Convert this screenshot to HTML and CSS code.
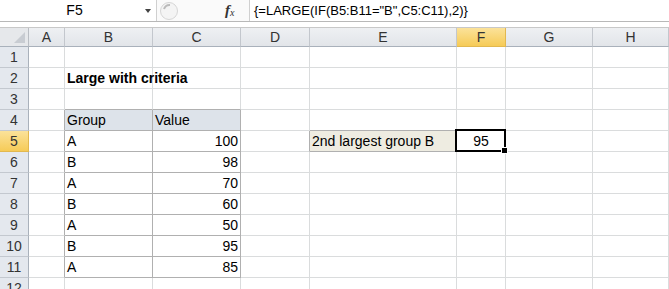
FILE: index.html
```html
<!DOCTYPE html>
<html lang="en">
<head>
  <meta charset="UTF-8">
  <title>Large with criteria</title>
  <link rel="stylesheet" href="styles.css">
</head>
<body>
  <div class="formula-bar">
    <div class="name-box">
      <span class="name">F5</span>
      <span class="arrow"></span>
    </div>
    <div class="splitter">
      <svg width="20" height="20" viewBox="0 0 20 20"><circle cx="10" cy="10" r="8.5" fill="#f4f4f4" stroke="#d6d6d6"/><path d="M5 8 a6 6 0 0 1 6 -4" fill="none" stroke="#bbb" stroke-width="2"/></svg>
    </div>
    <div class="fx"><i>f</i><small>x</small></div>
    <div class="formula">{=LARGE(IF(B5:B11="B",C5:C11),2)}</div>
  </div>

  <div class="sheet">
    <!-- header row -->
    <div class="corner"></div>
    <div class="ch">A</div><div class="ch">B</div><div class="ch">C</div><div class="ch">D</div>
    <div class="ch">E</div><div class="ch on">F</div><div class="ch">G</div><div class="ch">H</div>

    <div class="rh">1</div>
    <div class="c"></div><div class="c"></div><div class="c"></div><div class="c"></div><div class="c"></div><div class="c"></div><div class="c"></div><div class="c"></div>

    <div class="rh">2</div>
    <div class="c"></div><div class="c title">Large with criteria</div><div class="c"></div><div class="c"></div><div class="c"></div><div class="c"></div><div class="c"></div><div class="c"></div>

    <div class="rh">3</div>
    <div class="c"></div><div class="c tt"></div><div class="c tt"></div><div class="c"></div><div class="c"></div><div class="c"></div><div class="c"></div><div class="c"></div>

    <div class="rh">4</div>
    <div class="c tl"></div><div class="c t th">Group</div><div class="c t th">Value</div><div class="c"></div><div class="c tt"></div><div class="c"></div><div class="c"></div><div class="c"></div>

    <div class="rh on">5</div>
    <div class="c tl"></div><div class="c t">A</div><div class="c t num">100</div><div class="c tl"></div><div class="c t label">2nd largest group B</div><div class="c sel num">95</div><div class="c"></div><div class="c"></div>

    <div class="rh">6</div>
    <div class="c tl"></div><div class="c t">B</div><div class="c t num">98</div><div class="c"></div><div class="c"></div><div class="c"></div><div class="c"></div><div class="c"></div>

    <div class="rh">7</div>
    <div class="c tl"></div><div class="c t">A</div><div class="c t num">70</div><div class="c"></div><div class="c"></div><div class="c"></div><div class="c"></div><div class="c"></div>

    <div class="rh">8</div>
    <div class="c tl"></div><div class="c t">B</div><div class="c t num">60</div><div class="c"></div><div class="c"></div><div class="c"></div><div class="c"></div><div class="c"></div>

    <div class="rh">9</div>
    <div class="c tl"></div><div class="c t">A</div><div class="c t num">50</div><div class="c"></div><div class="c"></div><div class="c"></div><div class="c"></div><div class="c"></div>

    <div class="rh">10</div>
    <div class="c tl"></div><div class="c t">B</div><div class="c t num">95</div><div class="c"></div><div class="c"></div><div class="c"></div><div class="c"></div><div class="c"></div>

    <div class="rh">11</div>
    <div class="c tl"></div><div class="c t">A</div><div class="c t num">85</div><div class="c"></div><div class="c"></div><div class="c"></div><div class="c"></div><div class="c"></div>

    <div class="rh">12</div>
    <div class="c"></div><div class="c"></div><div class="c"></div><div class="c"></div><div class="c"></div><div class="c"></div><div class="c"></div><div class="c"></div>
  </div>
</body>
</html>
```

FILE: styles.css
```css
html, body {
  margin: 0;
  padding: 0;
  background: #fff;
  color: #000;
  font-family: "Liberation Sans", Arial, sans-serif;
  font-size: 14px;
  width: 669px;
  height: 289px;
  overflow: hidden;
}

/* formula bar */
.formula-bar {
  display: flex;
  height: 21px;
  border-bottom: 1px solid #b8b8b8;
  background: #fff;
}
.name-box {
  width: 157px;
  display: flex;
  align-items: center;
  position: relative;
  border-right: 1px solid #d0d0d0;
  box-sizing: border-box;
}
.name {
  flex: 1;
  text-align: center;
  padding-left: 4px;
  line-height: 21px;
}
.arrow {
  width: 0;
  height: 0;
  border-left: 3px solid transparent;
  border-right: 3px solid transparent;
  border-top: 4px solid #444;
  margin-right: 5px;
}
.splitter {
  width: 62px;
  display: flex;
  align-items: center;
  padding-left: 2px;
  background: #fafafa;
}
.fx {
  width: 24px;
  display: flex;
  align-items: center;
  justify-content: flex-start;
  padding-left: 4px;
  background: #fafafa;
  border-right: 1px solid #d0d0d0;
  font-family: "Liberation Serif", serif;
  color: #333;
}
.fx i {
  font-size: 15px;
  font-weight: bold;
}
.fx small {
  font-size: 10px;
  font-style: italic;
  margin-top: 4px;
}
.formula {
  flex: 1;
  padding-left: 4px;
  line-height: 21px;
  font-size: 13px;
  white-space: nowrap;
}

/* sheet grid */
.sheet {
  margin-top: 5px;
  border-top: 1px solid #c8c8c8;
  display: grid;
  grid-template-columns: 29px 36px 88px 88px 69px 147px 49px 87px 76px;
  grid-template-rows: 19px repeat(12, 21px);
}
.corner, .ch, .rh, .c {
  box-sizing: border-box;
  border-right: 1px solid #dadcdd;
  border-bottom: 1px solid #dadcdd;
  line-height: 21px;
  white-space: nowrap;
  overflow: visible;
}
.corner {
  background: #e6e8eb;
  border-right-color: #b9bdc3;
  border-bottom-color: #a9b1bb;
  position: relative;
}
.corner::after {
  content: "";
  position: absolute;
  right: 3px;
  bottom: 3px;
  border-left: 11px solid transparent;
  border-bottom: 11px solid #c8ccd2;
}
.ch {
  background: linear-gradient(#eef0f3, #e2e5e9);
  border-right-color: #c3c7cd;
  border-bottom-color: #a9b1bb;
  text-align: center;
  color: #333;
  line-height: 19px;
}
.rh {
  background: #e4e8ee;
  border-right-color: #a9b1bb;
  border-bottom-color: #c3c8cf;
  text-align: center;
  color: #333;
}
.ch.on, .rh.on {
  background: linear-gradient(#fbe29a, #f6cb57);
  border-right-color: #e2b84f;
  border-bottom-color: #e2b84f;
}

/* cells */
.c {
  padding: 0 2px;
}
.title {
  font-weight: bold;
}
.t, .tl {
  border-right-color: #b0b0b0;
}
.t, .tt {
  border-bottom-color: #b0b0b0;
}
.th {
  background: #dde3ea;
}
.num {
  text-align: right;
}
.label {
  background: #eeece1;
}
.sel {
  position: relative;
  text-align: center;
}
.sel::before {
  content: "";
  position: absolute;
  left: -2px;
  top: -2px;
  right: -1px;
  bottom: -1px;
  border: 2px solid #000;
}
.sel::after {
  content: "";
  position: absolute;
  right: -3px;
  bottom: -3px;
  width: 5px;
  height: 5px;
  background: #000;
  border: 1px solid #fff;
}
```
